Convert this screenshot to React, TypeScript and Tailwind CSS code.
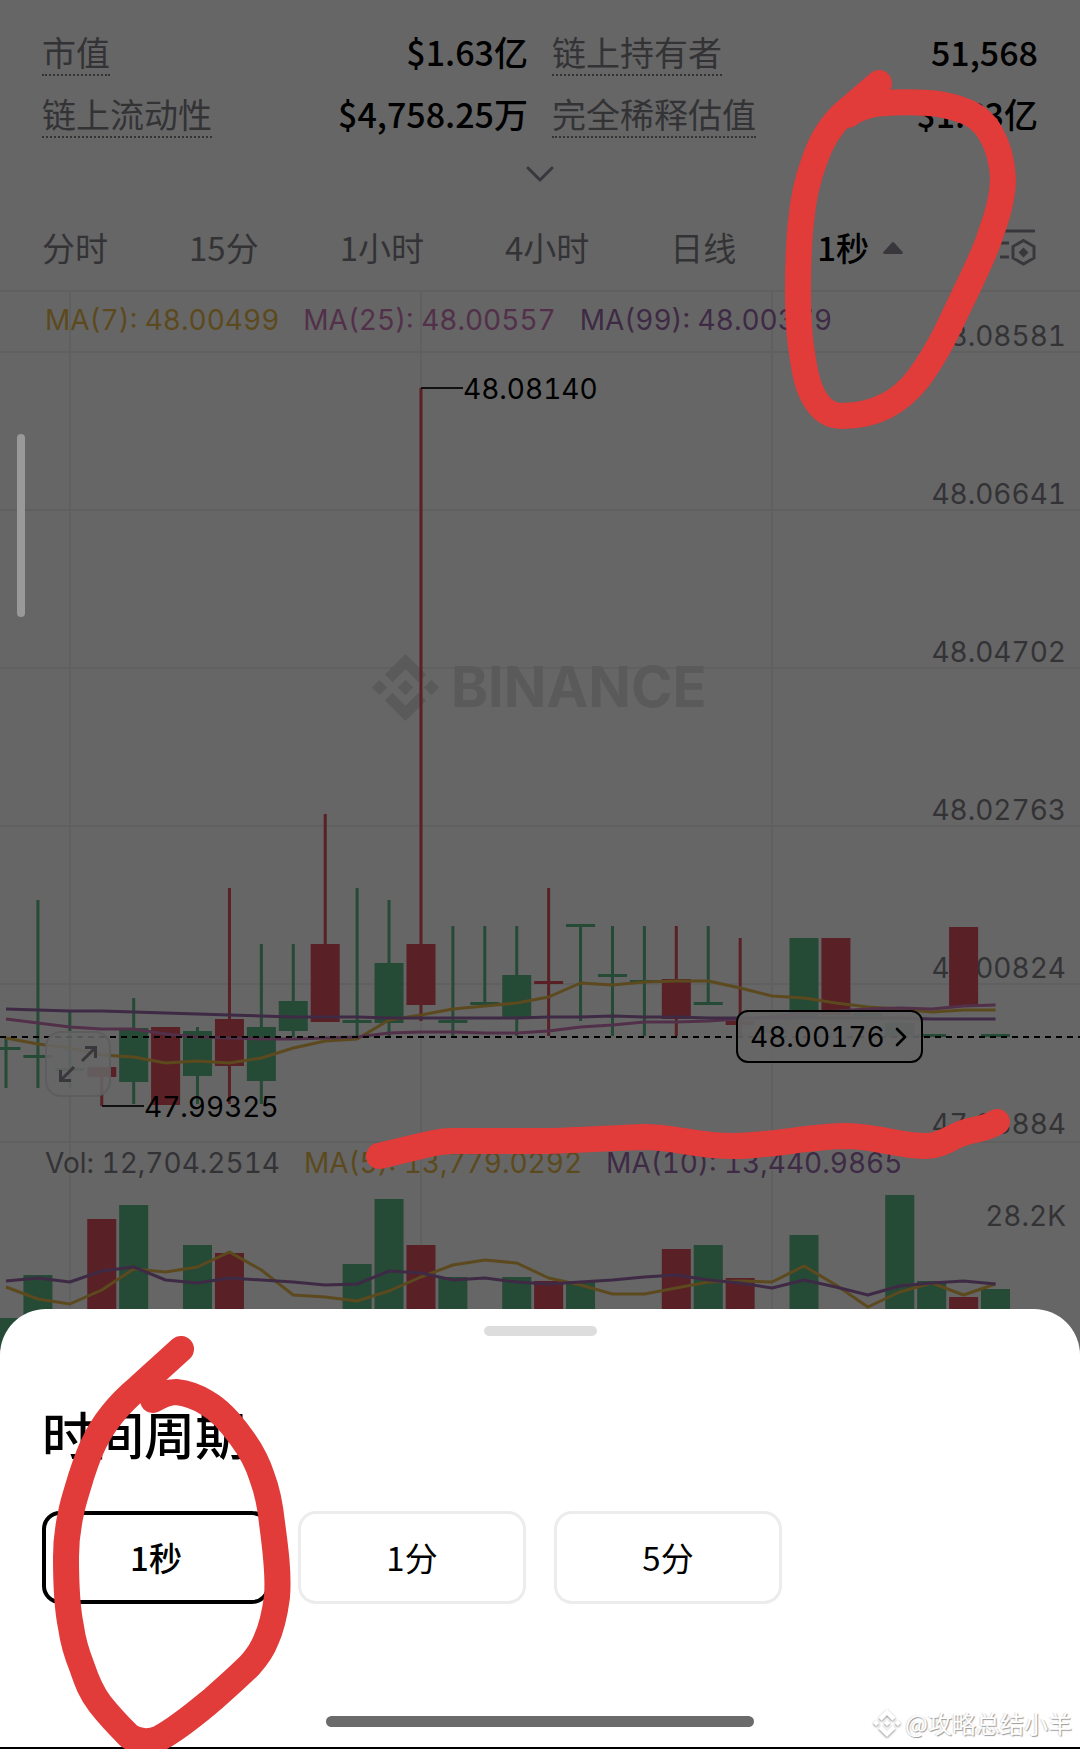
import { ChevronDown, ChevronRight } from "lucide-react";
import clsx from "clsx";

const GREEN = "#254a36";
const RED = "#592026";
const YELLOW = "#5c4a1e";
const PINK = "#52304a";
const PURPLE = "#3e2a45";

const stats = [
  { label: "市值", value: "$1.63亿" },
  { label: "链上持有者", value: "51,568" },
  { label: "链上流动性", value: "$4,758.25万" },
  { label: "完全稀释估值", value: "$1.63亿" },
];

const tabs = ["分时", "15分", "1小时", "4小时", "日线"];

const periods = ["1秒", "1分", "5分"];

const priceLevels = [
  { y: 352, label: "48.08581", base: 346 },
  { y: 510, label: "48.06641", base: 504 },
  { y: 668, label: "48.04702", base: 662 },
  { y: 826, label: "48.02763", base: 820 },
  { y: 984, label: "48.00824", base: 978 },
  { y: 1142, label: "47.98884", base: 1134 },
];

// [up, wick top, wick bottom, body top, body bottom]
type Candle = [boolean, number, number, number, number];

const candles: Candle[] = [
  [true, 1038, 1088, 1047, 1050],
  [true, 900, 1088, 1055, 1058],
  [true, 1011, 1088, 1068, 1071],
  [false, 1067, 1106, 1067, 1077],
  [true, 998, 1104, 1028, 1082],
  [false, 1027, 1105, 1027, 1105],
  [true, 1027, 1104, 1031, 1076],
  [false, 888, 1104, 1019, 1066],
  [true, 944, 1104, 1027, 1081],
  [true, 944, 1037, 1001, 1031],
  [false, 814, 1022, 944, 1022],
  [true, 888, 1037, 1020, 1023],
  [true, 900, 1036, 963, 1023],
  [false, 388, 1021, 944, 1005],
  [true, 926, 1036, 1020, 1023],
  [true, 926, 1003, 1002, 1005],
  [true, 926, 1036, 975, 1018],
  [false, 888, 1036, 981, 984],
  [true, 924, 1021, 924, 927],
  [true, 926, 1036, 974, 977],
  [true, 926, 1036, 980, 983],
  [false, 926, 1036, 979, 1019],
  [true, 926, 1003, 1002, 1005],
  [false, 938, 1036, 1021, 1025],
  [true, 1030, 1033, 1030, 1033],
  [true, 938, 1018, 938, 1018],
  [false, 938, 1015, 938, 1015],
  [true, 1013, 1016, 1013, 1016],
  [true, 1023, 1037, 1023, 1037],
  [true, 1034, 1037, 1034, 1037],
  [false, 927, 1006, 927, 1006],
  [true, 1034, 1037, 1034, 1037],
];

const ma7 = [
  1038, 1044, 1048, 1055, 1057, 1063, 1061, 1063, 1058, 1048, 1041, 1039, 1020, 1015, 1009, 1006,
  1003, 997, 983, 985, 982, 981, 981, 988, 996, 998, 1003, 1007, 1009, 1012, 1010, 1010,
];
const ma25 = [
  1019, 1023, 1027, 1029, 1029, 1034, 1037, 1038, 1039, 1039, 1038, 1037, 1033, 1032, 1032, 1033,
  1033, 1031, 1027, 1025, 1022, 1022, 1021, 1019, 1017, 1013, 1011, 1009, 1008, 1009, 1006, 1005,
];
const ma99 = [
  1009, 1010, 1011, 1011, 1012, 1013, 1014, 1015, 1016, 1017, 1017, 1017, 1018, 1018, 1018, 1018,
  1018, 1017, 1017, 1016, 1017, 1017, 1018, 1018, 1018, 1018, 1018, 1018, 1018, 1019, 1019, 1019,
];

// bar top per slot, null where the bar stays below the sheet
const volumes: [number | null, boolean][] = [
  [1318, true], [1275, true], [null, true], [1219, false], [1205, true], [null, false],
  [1245, true], [1253, false], [null, true], [null, true], [null, false], [1264, true],
  [1199, true], [1245, false], [1277, true], [null, true], [1277, true], [1281, false],
  [1281, true], [null, true], [null, true], [1249, false], [1245, true], [1278, false],
  [null, true], [1235, true], [null, false], [null, true], [1195, true], [1281, true],
  [1297, false], [1289, true],
];
const volMa5 = [
  1287, 1299, 1304, 1290, 1269, 1272, 1267, 1252, 1270, 1295, 1297, 1301, 1291, 1277, 1265, 1260,
  1263, 1278, 1285, 1294, 1294, 1288, 1282, 1281, 1282, 1266, 1285, 1307, 1292, 1283, 1295, 1284,
];
const volMa10 = [
  1281, 1278, 1282, 1271, 1267, 1280, 1283, 1278, 1280, 1282, 1285, 1284, 1271, 1273, 1280, 1278,
  1282, 1284, 1282, 1280, 1277, 1275, 1280, 1283, 1288, 1280, 1287, 1295, 1286, 1283, 1281, 1284,
];

const slotX = (i: number) => 6 + i * 31.92;
const toPoints = (ys: number[]) => ys.map((y, i) => `${slotX(i)},${y}`).join(" ");

const BinancePaths = () => (
  <>
    <path d="M38.73 53.2l24.59-24.58 24.6 24.6 14.3-14.31L63.32 0 24.42 38.9z" />
    <path d="M0 63.31L14.3 49l14.31 14.31-14.31 14.3z" />
    <path d="M38.73 73.41l24.59 24.59 24.6-24.6 14.31 14.29-38.9 38.91L24.42 87.71z" />
    <path d="M98 63.31L112.3 49l14.31 14.31-14.31 14.3z" />
    <path d="M77.83 63.3L63.32 48.78 48.78 63.3l14.54 14.53z" />
  </>
);

const Stats = () => (
  <dl className="grid grid-cols-2 gap-x-6 gap-y-3.5 px-[42px] pt-7 text-[34px] leading-[48px]">
    {stats.map((s) => (
      <div key={s.label} className="flex items-start justify-between">
        <dt className="h-12 border-b-2 border-dotted border-[#333]">{s.label}</dt>
        <dd className="font-medium text-black">{s.value}</dd>
      </div>
    ))}
  </dl>
);

const IndicatorIcon = () => (
  <svg width="44" height="44" viewBox="0 0 44 44" fill="none" stroke="#39373c" strokeWidth="3">
    <path d="M4 5h35M4 17h9M4 31h9" />
    <path d="M27.500 14.500l10.500 6v11.500l-10.500 6-10.500-6V20.500z" />
    <path d="M27.500 21.500l5 5-5 5-5-5z" fill="#39373c" stroke="none" />
  </svg>
);

const TabBar = () => (
  <nav className="mt-1 flex h-[84px] items-center gap-[81px] pr-10 pl-[42px] text-[33px]">
    {tabs.map((t) => (
      <button key={t} type="button" className="whitespace-nowrap">
        {t}
      </button>
    ))}
    <button type="button" className="flex items-center gap-3.5 font-medium whitespace-nowrap text-black">
      1秒
      <svg width="20" height="12" viewBox="0 0 20 12" fill="#39373c" aria-hidden="true">
        <path d="M9 .6a1.400 1.400 0 0 1 2 0l8.400 9.200c.8.900.3 2.200-.9 2.200h-17C.3 12-.2 10.700.6 9.800z" />
      </svg>
    </button>
    <button type="button" aria-label="指标设置" className="ml-auto">
      <IndicatorIcon />
    </button>
  </nav>
);

const ChartCanvas = () => (
  <svg viewBox="0 290 1080 1060" className="block w-full" fontSize="28" role="img" aria-label="K线图">
    <g stroke="#606060" strokeWidth="2">
      <path d="M0 291H1080M70 291V1350M421 291V1350M772 291V1350" />
      {priceLevels.map((l) => (
        <line key={l.y} x1="0" x2="1080" y1={l.y} y2={l.y} />
      ))}
    </g>

    <svg x="372" y="654" width="67" height="67" viewBox="0 0 126.61 126.61" fill="#5a5a5a">
      <BinancePaths />
    </svg>
    <text x="451" y="707" fontSize="56" fontWeight="700" fill="#5a5a5a">BINANCE</text>

    <g fill="#333336" textAnchor="end">
      {priceLevels.map((l) => (
        <text key={l.label} x="1066" y={l.base}>{l.label}</text>
      ))}
      <text x="1066" y="1226">28.2K</text>
    </g>

    {candles.map(([up, high, low, top, bottom], i) => (
      <g key={i} fill={up ? GREEN : RED}>
        <rect x={slotX(i) - 1.5} y={high} width="3" height={low - high} />
        <rect x={slotX(i) - 14.5} y={top} width="29" height={bottom - top} />
      </g>
    ))}

    {volumes.map(([top, up], i) =>
      top === null ? null : (
        <rect key={i} x={slotX(i) - 14.5} y={top} width="29" height={1350 - top} fill={up ? GREEN : RED} />
      )
    )}

    <g fill="none" strokeWidth="3" strokeLinejoin="round">
      <polyline points={toPoints(ma7)} stroke={YELLOW} />
      <polyline points={toPoints(ma25)} stroke={PINK} />
      <polyline points={toPoints(ma99)} stroke={PURPLE} />
      <polyline points={toPoints(volMa5)} stroke={YELLOW} />
      <polyline points={toPoints(volMa10)} stroke={PURPLE} />
    </g>

    <path d="M0 1037H1080" stroke="#000" strokeWidth="2" strokeDasharray="6 5" />
    <path d="M421 388H463M102 1106H144" stroke="#111" strokeWidth="2" />
    <g fill="#000">
      <text x="463" y="399">48.08140</text>
      <text x="144" y="1117">47.99325</text>
    </g>
  </svg>
);

const Chart = () => (
  <section className="relative font-['Inter','Noto_Sans_CJK_SC',sans-serif] text-[28px] leading-9 tabular-nums">
    <ChartCanvas />

    <div className="absolute top-3 left-[45px] flex gap-6 whitespace-nowrap">
      <span className="text-[#5c4a1e]">MA(7): 48.00499</span>
      <span className="text-[#52304a]">MA(25): 48.00557</span>
      <span className="text-[#3e2a45]">MA(99): 48.00379</span>
    </div>

    <div className="absolute top-[855px] left-[45px] flex gap-6 whitespace-nowrap">
      <span>Vol: 12,704.2514</span>
      <span className="text-[#5c4a1e]">MA(5): 13,779.0292</span>
      <span className="text-[#3e2a45]">MA(10): 13,440.9865</span>
    </div>

    <button
      type="button"
      aria-label="全屏"
      className="absolute top-[741px] left-[45px] flex size-[66px] items-center justify-center rounded-2xl border-2 border-[#5d5d5d] bg-[#666]/85"
    >
      <svg width="40" height="40" viewBox="0 0 40 40" fill="none" stroke="#39373c" strokeWidth="3" aria-hidden="true">
        <path d="M24 17L37 4M27 3.500h10.500V14M16 23L3 36M2.500 26v10.500H13" />
      </svg>
    </button>

    <button
      type="button"
      className="absolute top-[720px] left-[736px] flex h-[53px] w-[187px] items-center justify-between rounded-xl border-2 border-black bg-[#666]/90 pr-1 pl-3 text-black"
    >
      48.00176
      <ChevronRight className="size-8" strokeWidth={2} />
    </button>

    <div className="absolute top-36 left-[17px] h-[183px] w-2 rounded-full bg-[#999]" />
  </section>
);

const PeriodSheet = () => (
  <section className="relative -mt-[41px] flex grow flex-col rounded-t-[46px] bg-white px-[42px] pt-[17px] text-black">
    <div className="mx-auto h-2.5 w-[113px] rounded-full bg-[#ddd]" />
    <h2 className="mt-16 text-[51px] leading-[66px] font-medium">时间周期</h2>
    <div className="mt-[45px] flex gap-7">
      {periods.map((p, i) => (
        <button
          key={p}
          type="button"
          aria-pressed={i === 0}
          className={clsx(
            "h-[93px] w-[228px] rounded-[18px] text-[33px]",
            i === 0 ? "border-4 border-black font-medium" : "border-3 border-[#ececec]"
          )}
        >
          {p}
        </button>
      ))}
    </div>
    <div className="mx-auto mt-28 mb-5 h-[11px] w-[428px] rounded-full bg-[#6b6b6b]" />
    <div className="absolute right-2 bottom-2 flex items-center gap-1 text-[24px] leading-9 text-white [text-shadow:1px_1px_1px_#999,-1px_0_1px_#ddd]">
      <svg viewBox="0 0 126.61 126.61" className="size-7 drop-shadow-[0_1px_1px_#888]" fill="currentColor" aria-hidden="true">
        <BinancePaths />
      </svg>
      <span>@攻略总结小羊</span>
    </div>
    <div className="absolute inset-x-0 bottom-0 h-0.5 bg-black" />
  </section>
);

// red marker strokes over the whole screen
const Marker = () => (
  <svg
    viewBox="0 0 1080 1749"
    className="pointer-events-none absolute inset-x-0 top-0 w-full"
    fill="none"
    stroke="#e13b3a"
    strokeWidth="26"
    strokeLinecap="round"
    strokeLinejoin="round"
    aria-hidden="true"
  >
    <path d="M879 83L844 113C829 127 820 143 814 162C806 183 803 200 801 222C798 250 798 268 798 290C798 315 799 335 802 353C805 375 808 388 815 399C822 411 831 416 842 416C858 416 872 413 886 406C900 399 910 389 918 379C929 364 938 349 946 333L970 283C978 266 986 250 991 233C999 212 1003 195 1003 178C1002 160 998 146 991 134C984 121 974 114 962 110C951 106 942 104 929 103C913 102 898 102 884 103C870 104 858 107 848 115" />
    <path d="M379 1156L425 1145C437 1142 444 1141 454 1141L547 1141C580 1140 620 1138 643 1137C675 1137 697 1146 733 1146C770 1146 805 1137 843 1136C880 1136 897 1146 927 1146C941 1146 951 1137 963 1133C975 1129 986 1129 997 1122" />
    <path d="M181 1349L138 1388C119 1404 103 1424 94 1443C88 1455 85 1465 81 1477C76 1494 73 1502 71 1513C67 1531 66 1545 66 1557C66 1590 67 1608 71 1627C73 1642 78 1657 82 1667C87 1682 91 1692 100 1704C111 1718 121 1728 129 1736C139 1743 149 1743 160 1738C180 1727 196 1713 213 1699C230 1684 241 1674 250 1665C257 1657 263 1648 266 1640C272 1627 275 1612 277 1597C279 1573 275 1545 272 1523C270 1504 267 1490 262 1477C257 1461 250 1449 241 1437C231 1423 221 1411 207 1403C196 1396 186 1393 176 1392C167 1392 160 1396 153 1400" />
  </svg>
);

const App = () => (
  <main className="relative flex min-h-screen flex-col overflow-hidden bg-[#666] font-['Noto_Sans_CJK_SC',sans-serif] text-[#333336]">
    <Stats />
    <button type="button" aria-label="展开" className="mx-auto mt-2 flex h-14 items-center justify-center">
      <ChevronDown className="size-12 text-[#39373c]" strokeWidth={1.5} />
    </button>
    <TabBar />
    <Chart />
    <PeriodSheet />
    <Marker />
  </main>
);

export default App;
